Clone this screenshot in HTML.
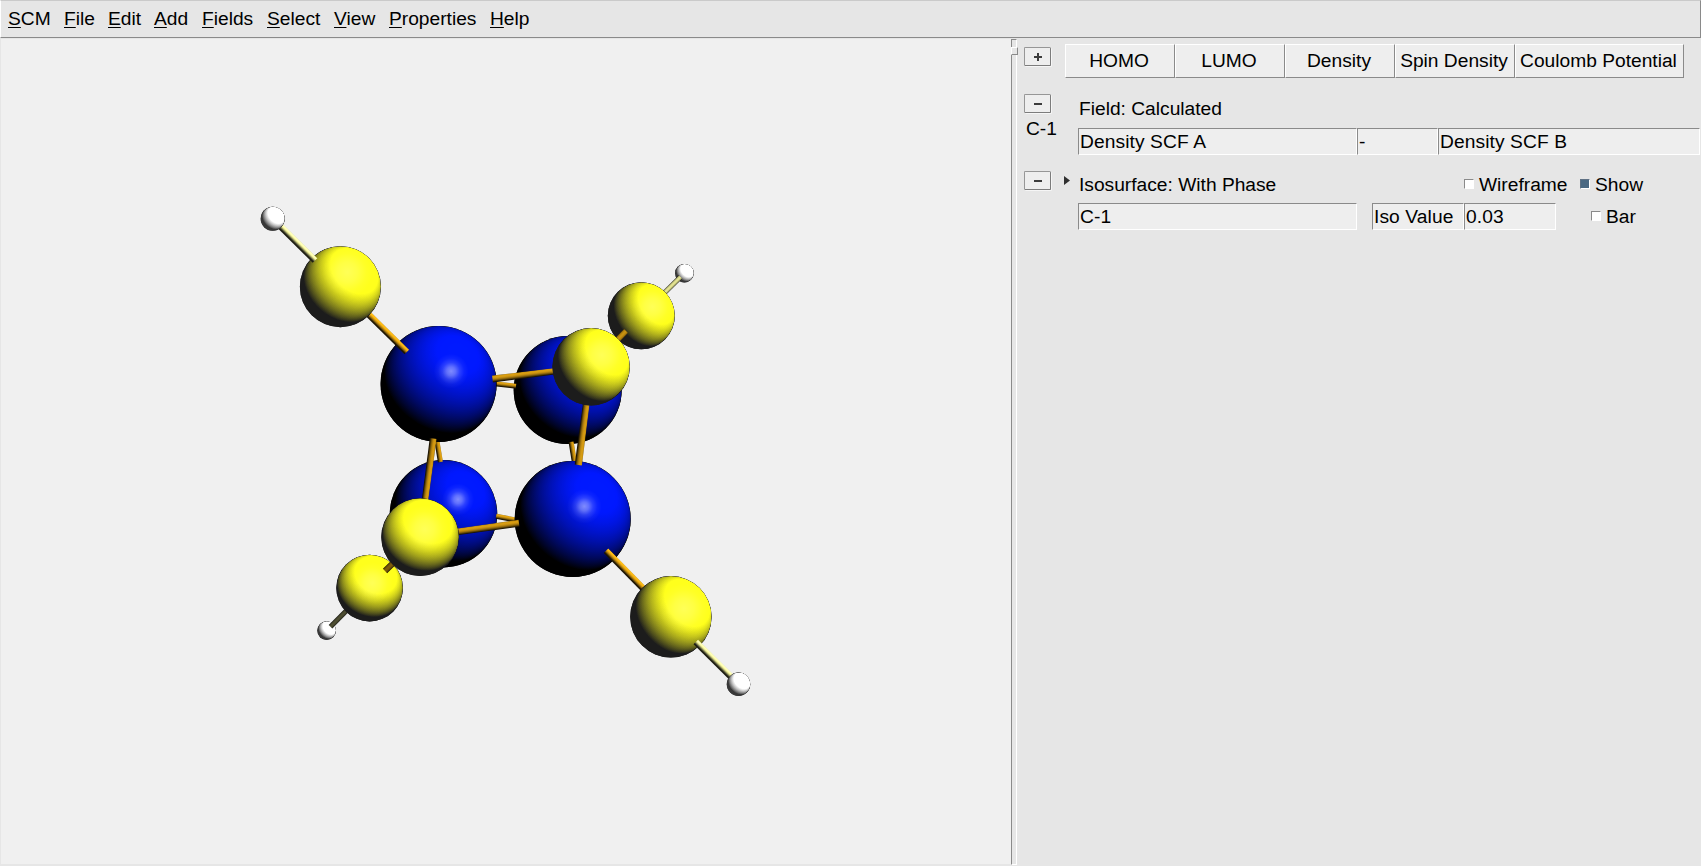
<!DOCTYPE html>
<html>
<head>
<meta charset="utf-8">
<title>SCM</title>
<style>
html,body{margin:0;padding:0;}
body{width:1701px;height:866px;overflow:hidden;background:#e6e6e6;font-family:"Liberation Sans",sans-serif;font-size:19.2px;color:#000;position:relative;}
.abs{position:absolute;}
#menubar{left:0;top:0;width:1701px;height:38px;background:#e6e6e6;border-top:1px solid #cacaca;border-left:1px solid #fff;border-right:1px solid #8a8a8a;border-bottom:1px solid #8a8a8a;box-sizing:border-box;}
#menubar span.m{position:absolute;margin-left:-1px;top:7px;line-height:22px;white-space:nowrap;}
#menubar u{text-decoration:underline;text-decoration-thickness:1px;text-underline-offset:2px;}
#canvas{left:1px;top:39px;width:1010px;height:825px;background:#f0f0f0;}
#panel{left:1017px;top:39px;width:684px;height:827px;background:#e6e6e6;}
#sash{left:1011px;top:39px;width:6px;height:826px;background:#e6e6e6;border-left:1px solid #8a8a8a;border-top:1px solid #8a8a8a;border-right:1px solid #fff;border-bottom:1px solid #fff;box-sizing:border-box;}
#sashh{left:1011px;top:47px;width:7px;height:8px;background:#e6e6e6;border-top:1px solid #fff;border-left:1px solid #fff;border-right:1px solid #8a8a8a;border-bottom:1px solid #8a8a8a;box-sizing:border-box;}
.btn{box-sizing:border-box;background:#eeeeee;border-top:1px solid #fff;border-left:1px solid #fff;border-right:1px solid #8a8a8a;border-bottom:1px solid #8a8a8a;text-align:center;white-space:nowrap;line-height:32px;height:34px;top:44px;padding-right:2px;}
.sbtn{box-sizing:border-box;background:#eeeeee;border:1px solid #7c7c7c;border-top-color:#969696;border-left-color:#969696;border-radius:1.5px;box-shadow:1px 1px 0 #f6f6f6;width:27px;height:19px;left:1024px;}
.sbtn i{position:absolute;background:#3c3c3c;}
.ent{box-sizing:border-box;background:#eeeeee;border-top:1px solid #8a8a8a;border-left:1px solid #8a8a8a;border-right:1px solid #fff;border-bottom:1px solid #fff;height:27px;line-height:26px;padding-left:1px;white-space:nowrap;letter-spacing:0.1px;}
.lbl{white-space:nowrap;line-height:22px;}
.cb{box-sizing:border-box;width:10px;height:10px;background:#fff;border-top:1px solid #8a8a8a;border-left:1px solid #8a8a8a;border-right:1px solid #fff;border-bottom:1px solid #fff;}
.cb.on{background:#4b6983;border-top-color:#5f7184;border-left-color:#5f7184;}
</style>
</head>
<body>
<div id="canvas" class="abs">
<svg id="mol" width="1011" height="827" viewBox="0 39 1011 827" style="position:absolute;left:-1px;top:0">
<defs>
<radialGradient id="nz" cx="0.5" cy="0.5" r="0.5"><stop offset="0.000" stop-color="rgb(0,255,0)"/><stop offset="0.150" stop-color="rgb(0,252,0)"/><stop offset="0.300" stop-color="rgb(0,243,0)"/><stop offset="0.400" stop-color="rgb(0,234,0)"/><stop offset="0.500" stop-color="rgb(0,221,0)"/><stop offset="0.600" stop-color="rgb(0,204,0)"/><stop offset="0.680" stop-color="rgb(0,187,0)"/><stop offset="0.750" stop-color="rgb(0,169,0)"/><stop offset="0.810" stop-color="rgb(0,150,0)"/><stop offset="0.860" stop-color="rgb(0,130,0)"/><stop offset="0.900" stop-color="rgb(0,111,0)"/><stop offset="0.930" stop-color="rgb(0,94,0)"/><stop offset="0.955" stop-color="rgb(0,76,0)"/><stop offset="0.975" stop-color="rgb(0,57,0)"/><stop offset="0.990" stop-color="rgb(0,36,0)"/><stop offset="1.000" stop-color="rgb(0,0,0)"/></radialGradient>
<radialGradient id="sb" cx="0.5" cy="0.5" r="0.5"><stop offset="0" stop-color="#fff" stop-opacity="0.5"/><stop offset="0.25" stop-color="#fff" stop-opacity="0.38"/><stop offset="0.5" stop-color="#fff" stop-opacity="0.17"/><stop offset="0.75" stop-color="#fff" stop-opacity="0.05"/><stop offset="1" stop-color="#fff" stop-opacity="0"/></radialGradient>
<radialGradient id="sy" cx="0.5" cy="0.5" r="0.5"><stop offset="0" stop-color="#ffffa0" stop-opacity="0.45"/><stop offset="0.4" stop-color="#ffffa0" stop-opacity="0.3"/><stop offset="0.75" stop-color="#ffffa0" stop-opacity="0.08"/><stop offset="1" stop-color="#ffffa0" stop-opacity="0"/></radialGradient>
<linearGradient id="nt0" x1="0.1464" y1="0.8536" x2="0.8536" y2="0.1464"><stop offset="0" stop-color="#000"/><stop offset="1" stop-color="#f00"/></linearGradient>
<filter id="f0" x="-0.05" y="-0.05" width="1.1" height="1.1" color-interpolation-filters="sRGB"><feColorMatrix type="matrix" values="1.3323 0.7458 0 0 -0.6662  1.3323 0.7458 0 0 -0.6662  1.3323 0.7458 0 0 -0.6662  0 0 0 1 0"/><feColorMatrix type="matrix" values="1.2500 0 0 0 0.2200  0 1.2500 0 0 0.2200  0 0 1.2500 0 0.2200  0 0 0 1 0"/></filter>
<linearGradient id="nt1" x1="0.1000" y1="0.8000" x2="0.9000" y2="0.2000"><stop offset="0" stop-color="#000"/><stop offset="1" stop-color="#f00"/></linearGradient>
<filter id="f1" x="-0.05" y="-0.05" width="1.1" height="1.1" color-interpolation-filters="sRGB"><feColorMatrix type="matrix" values="1.4621 0.6823 0 0 -0.7011  1.4621 0.6823 0 0 -0.7011  1.4621 0.6823 0 0 -0.7011  0 0 0 1 0"/><feColorMatrix type="matrix" values="1.1300 0 0 0 0.1100  0 1.1300 0 0 0.1100  0 0 0.0000 0 0.1100  0 0 0 1 0"/></filter>
<linearGradient id="nt2" x1="0.1612" y1="0.8677" x2="0.8388" y2="0.1323"><stop offset="0" stop-color="#000"/><stop offset="1" stop-color="#f00"/></linearGradient>
<filter id="f2" x="-0.05" y="-0.05" width="1.1" height="1.1" color-interpolation-filters="sRGB"><feColorMatrix type="matrix" values="1.3290 0.7473 0 0 -0.6445  1.3290 0.7473 0 0 -0.6445  1.3290 0.7473 0 0 -0.6445  0 0 0 1 0"/><feColorMatrix type="matrix" values="0.0000 0 0 0 0.0000  0 0.1000 0 0 0.0000  0 0 1.0600 0 0.0000  0 0 0 1 0"/></filter>
<linearGradient id="nt3" x1="0.2834" y1="0.9506" x2="0.7166" y2="0.0494"><stop offset="0" stop-color="#000"/><stop offset="1" stop-color="#f00"/></linearGradient>
<filter id="f3" x="-0.05" y="-0.05" width="1.1" height="1.1" color-interpolation-filters="sRGB"><feColorMatrix type="matrix" values="1.1509 0.8178 0 0 -0.5455  1.1509 0.8178 0 0 -0.5455  1.1509 0.8178 0 0 -0.5455  0 0 0 1 0"/><feColorMatrix type="matrix" values="1.1300 0 0 0 0.1100  0 1.1300 0 0 0.1100  0 0 0.0000 0 0.1100  0 0 0 1 0"/></filter>
<linearGradient id="nt4" x1="0.2226" y1="0.9160" x2="0.7774" y2="0.0840"><stop offset="0" stop-color="#000"/><stop offset="1" stop-color="#f00"/></linearGradient>
<filter id="f4" x="-0.05" y="-0.05" width="1.1" height="1.1" color-interpolation-filters="sRGB"><feColorMatrix type="matrix" values="1.3103 0.7555 0 0 -0.6351  1.3103 0.7555 0 0 -0.6351  1.3103 0.7555 0 0 -0.6351  0 0 0 1 0"/><feColorMatrix type="matrix" values="0.0000 0 0 0 0.0000  0 0.1000 0 0 0.0000  0 0 1.0600 0 0.0000  0 0 0 1 0"/></filter>
<linearGradient id="nt5" x1="0.1270" y1="0.8330" x2="0.8730" y2="0.1670"><stop offset="0" stop-color="#000"/><stop offset="1" stop-color="#f00"/></linearGradient>
<filter id="f5" x="-0.05" y="-0.05" width="1.1" height="1.1" color-interpolation-filters="sRGB"><feColorMatrix type="matrix" values="1.4435 0.6922 0 0 -0.6917  1.4435 0.6922 0 0 -0.6917  1.4435 0.6922 0 0 -0.6917  0 0 0 1 0"/><feColorMatrix type="matrix" values="1.1300 0 0 0 0.1100  0 1.1300 0 0 0.1100  0 0 0.0000 0 0.1100  0 0 0 1 0"/></filter>
<linearGradient id="nt6" x1="0.2696" y1="0.9437" x2="0.7304" y2="0.0563"><stop offset="0" stop-color="#000"/><stop offset="1" stop-color="#f00"/></linearGradient>
<filter id="f6" x="-0.05" y="-0.05" width="1.1" height="1.1" color-interpolation-filters="sRGB"><feColorMatrix type="matrix" values="1.1722 0.8102 0 0 -0.5561  1.1722 0.8102 0 0 -0.5561  1.1722 0.8102 0 0 -0.5561  0 0 0 1 0"/><feColorMatrix type="matrix" values="1.1300 0 0 0 0.1100  0 1.1300 0 0 0.1100  0 0 0.0000 0 0.1100  0 0 0 1 0"/></filter>
<linearGradient id="nt7" x1="0.1678" y1="0.8737" x2="0.8322" y2="0.1263"><stop offset="0" stop-color="#000"/><stop offset="1" stop-color="#f00"/></linearGradient>
<filter id="f7" x="-0.05" y="-0.05" width="1.1" height="1.1" color-interpolation-filters="sRGB"><feColorMatrix type="matrix" values="1.3591 0.7336 0 0 -0.6495  1.3591 0.7336 0 0 -0.6495  1.3591 0.7336 0 0 -0.6495  0 0 0 1 0"/><feColorMatrix type="matrix" values="1.1300 0 0 0 0.1100  0 1.1300 0 0 0.1100  0 0 0.0000 0 0.1100  0 0 0 1 0"/></filter>
<linearGradient id="nt8" x1="0.1204" y1="0.8254" x2="0.8796" y2="0.1746"><stop offset="0" stop-color="#000"/><stop offset="1" stop-color="#f00"/></linearGradient>
<filter id="f8" x="-0.05" y="-0.05" width="1.1" height="1.1" color-interpolation-filters="sRGB"><feColorMatrix type="matrix" values="1.3929 0.7176 0 0 -0.6664  1.3929 0.7176 0 0 -0.6664  1.3929 0.7176 0 0 -0.6664  0 0 0 1 0"/><feColorMatrix type="matrix" values="1.1300 0 0 0 0.1100  0 1.1300 0 0 0.1100  0 0 0.0000 0 0.1100  0 0 0 1 0"/></filter>
<linearGradient id="bg0" gradientUnits="userSpaceOnUse" x1="669.50" y1="291.29" x2="666.00" y2="287.71"><stop offset="0.000" stop-color="rgb(39,39,25)"/><stop offset="0.075" stop-color="rgb(108,108,69)"/><stop offset="0.200" stop-color="rgb(177,177,113)"/><stop offset="0.350" stop-color="rgb(217,217,139)"/><stop offset="0.500" stop-color="rgb(231,231,148)"/><stop offset="0.650" stop-color="rgb(223,223,142)"/><stop offset="0.800" stop-color="rgb(188,188,120)"/><stop offset="0.925" stop-color="rgb(124,124,79)"/><stop offset="1.000" stop-color="rgb(39,39,25)"/></linearGradient>
<linearGradient id="bg1" gradientUnits="userSpaceOnUse" x1="610.87" y1="351.12" x2="606.23" y2="346.58"><stop offset="0.000" stop-color="rgb(29,21,2)"/><stop offset="0.075" stop-color="rgb(112,81,9)"/><stop offset="0.200" stop-color="rgb(163,118,13)"/><stop offset="0.350" stop-color="rgb(192,139,15)"/><stop offset="0.500" stop-color="rgb(201,146,16)"/><stop offset="0.650" stop-color="rgb(193,140,16)"/><stop offset="0.800" stop-color="rgb(165,120,13)"/><stop offset="0.925" stop-color="rgb(115,83,9)"/><stop offset="1.000" stop-color="rgb(29,21,2)"/></linearGradient>
<linearGradient id="bg2" gradientUnits="userSpaceOnUse" x1="341.47" y1="612.14" x2="345.03" y2="615.66"><stop offset="0.000" stop-color="rgb(13,13,9)"/><stop offset="0.075" stop-color="rgb(41,41,27)"/><stop offset="0.200" stop-color="rgb(64,64,41)"/><stop offset="0.350" stop-color="rgb(77,77,49)"/><stop offset="0.500" stop-color="rgb(80,80,51)"/><stop offset="0.650" stop-color="rgb(76,76,48)"/><stop offset="0.800" stop-color="rgb(62,62,40)"/><stop offset="0.925" stop-color="rgb(39,39,25)"/><stop offset="1.000" stop-color="rgb(13,13,9)"/></linearGradient>
<linearGradient id="bg3" gradientUnits="userSpaceOnUse" x1="400.47" y1="551.89" x2="404.63" y2="556.21"><stop offset="0.000" stop-color="rgb(19,13,1)"/><stop offset="0.075" stop-color="rgb(76,55,6)"/><stop offset="0.200" stop-color="rgb(107,78,9)"/><stop offset="0.350" stop-color="rgb(124,90,10)"/><stop offset="0.500" stop-color="rgb(128,93,10)"/><stop offset="0.650" stop-color="rgb(121,88,10)"/><stop offset="0.800" stop-color="rgb(102,74,8)"/><stop offset="0.925" stop-color="rgb(68,49,5)"/><stop offset="1.000" stop-color="rgb(19,13,1)"/></linearGradient>
<linearGradient id="bg4" gradientUnits="userSpaceOnUse" x1="505.54" y1="382.47" x2="504.96" y2="387.43"><stop offset="0.000" stop-color="rgb(155,112,12)"/><stop offset="0.075" stop-color="rgb(218,158,18)"/><stop offset="0.200" stop-color="rgb(226,164,18)"/><stop offset="0.350" stop-color="rgb(209,151,17)"/><stop offset="0.500" stop-color="rgb(174,126,14)"/><stop offset="0.650" stop-color="rgb(124,90,10)"/><stop offset="0.800" stop-color="rgb(58,42,5)"/><stop offset="0.925" stop-color="rgb(25,18,2)"/><stop offset="1.000" stop-color="rgb(25,18,2)"/></linearGradient>
<linearGradient id="bg5" gradientUnits="userSpaceOnUse" x1="575.27" y1="452.05" x2="570.33" y2="452.85"><stop offset="0.000" stop-color="rgb(155,112,12)"/><stop offset="0.075" stop-color="rgb(218,158,18)"/><stop offset="0.200" stop-color="rgb(226,164,18)"/><stop offset="0.350" stop-color="rgb(209,151,17)"/><stop offset="0.500" stop-color="rgb(174,126,14)"/><stop offset="0.650" stop-color="rgb(124,90,10)"/><stop offset="0.800" stop-color="rgb(57,41,5)"/><stop offset="0.925" stop-color="rgb(25,18,2)"/><stop offset="1.000" stop-color="rgb(25,18,2)"/></linearGradient>
<linearGradient id="bg6" gradientUnits="userSpaceOnUse" x1="441.12" y1="451.04" x2="436.18" y2="451.86"><stop offset="0.000" stop-color="rgb(156,113,13)"/><stop offset="0.075" stop-color="rgb(218,158,18)"/><stop offset="0.200" stop-color="rgb(227,164,18)"/><stop offset="0.350" stop-color="rgb(209,151,17)"/><stop offset="0.500" stop-color="rgb(174,126,14)"/><stop offset="0.650" stop-color="rgb(124,90,10)"/><stop offset="0.800" stop-color="rgb(57,41,5)"/><stop offset="0.925" stop-color="rgb(25,18,2)"/><stop offset="1.000" stop-color="rgb(25,18,2)"/></linearGradient>
<linearGradient id="bg7" gradientUnits="userSpaceOnUse" x1="507.51" y1="515.89" x2="506.59" y2="520.81"><stop offset="0.000" stop-color="rgb(162,117,13)"/><stop offset="0.075" stop-color="rgb(224,162,18)"/><stop offset="0.200" stop-color="rgb(230,167,19)"/><stop offset="0.350" stop-color="rgb(211,153,17)"/><stop offset="0.500" stop-color="rgb(174,126,14)"/><stop offset="0.650" stop-color="rgb(122,88,10)"/><stop offset="0.800" stop-color="rgb(53,39,4)"/><stop offset="0.925" stop-color="rgb(25,18,2)"/><stop offset="1.000" stop-color="rgb(25,18,2)"/></linearGradient>
<linearGradient id="bg8" gradientUnits="userSpaceOnUse" x1="541.38" y1="369.48" x2="542.22" y2="376.22"><stop offset="0.000" stop-color="rgb(132,95,11)"/><stop offset="0.075" stop-color="rgb(203,147,16)"/><stop offset="0.200" stop-color="rgb(219,159,18)"/><stop offset="0.350" stop-color="rgb(210,152,17)"/><stop offset="0.500" stop-color="rgb(183,132,15)"/><stop offset="0.650" stop-color="rgb(140,101,11)"/><stop offset="0.800" stop-color="rgb(79,57,6)"/><stop offset="0.925" stop-color="rgb(27,19,2)"/><stop offset="1.000" stop-color="rgb(27,19,2)"/></linearGradient>
<linearGradient id="bg9" gradientUnits="userSpaceOnUse" x1="588.27" y1="416.31" x2="581.13" y2="415.39"><stop offset="0.000" stop-color="rgb(125,91,10)"/><stop offset="0.075" stop-color="rgb(197,143,16)"/><stop offset="0.200" stop-color="rgb(215,156,17)"/><stop offset="0.350" stop-color="rgb(208,151,17)"/><stop offset="0.500" stop-color="rgb(183,132,15)"/><stop offset="0.650" stop-color="rgb(142,103,11)"/><stop offset="0.800" stop-color="rgb(83,60,7)"/><stop offset="0.925" stop-color="rgb(27,19,2)"/><stop offset="1.000" stop-color="rgb(27,19,2)"/></linearGradient>
<linearGradient id="bg10" gradientUnits="userSpaceOnUse" x1="430.02" y1="488.25" x2="423.28" y2="487.35"><stop offset="0.000" stop-color="rgb(125,90,10)"/><stop offset="0.075" stop-color="rgb(197,143,16)"/><stop offset="0.200" stop-color="rgb(215,156,17)"/><stop offset="0.350" stop-color="rgb(208,151,17)"/><stop offset="0.500" stop-color="rgb(183,132,15)"/><stop offset="0.650" stop-color="rgb(142,103,11)"/><stop offset="0.800" stop-color="rgb(83,60,7)"/><stop offset="0.925" stop-color="rgb(27,19,2)"/><stop offset="1.000" stop-color="rgb(27,19,2)"/></linearGradient>
<linearGradient id="bg11" gradientUnits="userSpaceOnUse" x1="469.07" y1="526.73" x2="470.03" y2="533.67"><stop offset="0.000" stop-color="rgb(130,94,10)"/><stop offset="0.075" stop-color="rgb(201,146,16)"/><stop offset="0.200" stop-color="rgb(218,158,18)"/><stop offset="0.350" stop-color="rgb(210,152,17)"/><stop offset="0.500" stop-color="rgb(183,132,15)"/><stop offset="0.650" stop-color="rgb(141,102,11)"/><stop offset="0.800" stop-color="rgb(80,58,6)"/><stop offset="0.925" stop-color="rgb(27,19,2)"/><stop offset="1.000" stop-color="rgb(27,19,2)"/></linearGradient>
<linearGradient id="bg12" gradientUnits="userSpaceOnUse" x1="375.88" y1="317.03" x2="371.32" y2="321.67"><stop offset="0.000" stop-color="rgb(201,145,16)"/><stop offset="0.075" stop-color="rgb(255,189,21)"/><stop offset="0.200" stop-color="rgb(255,189,21)"/><stop offset="0.350" stop-color="rgb(231,167,19)"/><stop offset="0.500" stop-color="rgb(183,132,15)"/><stop offset="0.650" stop-color="rgb(119,86,10)"/><stop offset="0.800" stop-color="rgb(38,27,3)"/><stop offset="0.925" stop-color="rgb(27,19,2)"/><stop offset="1.000" stop-color="rgb(27,19,2)"/></linearGradient>
<linearGradient id="bg13" gradientUnits="userSpaceOnUse" x1="640.77" y1="581.47" x2="636.13" y2="586.03"><stop offset="0.000" stop-color="rgb(201,145,16)"/><stop offset="0.075" stop-color="rgb(255,189,21)"/><stop offset="0.200" stop-color="rgb(255,189,21)"/><stop offset="0.350" stop-color="rgb(231,167,19)"/><stop offset="0.500" stop-color="rgb(183,132,15)"/><stop offset="0.650" stop-color="rgb(119,86,10)"/><stop offset="0.800" stop-color="rgb(38,27,3)"/><stop offset="0.925" stop-color="rgb(27,19,2)"/><stop offset="1.000" stop-color="rgb(27,19,2)"/></linearGradient>
<linearGradient id="bg14" gradientUnits="userSpaceOnUse" x1="296.13" y1="237.29" x2="291.57" y2="241.91"><stop offset="0.000" stop-color="rgb(234,234,149)"/><stop offset="0.075" stop-color="rgb(255,255,189)"/><stop offset="0.200" stop-color="rgb(255,255,183)"/><stop offset="0.350" stop-color="rgb(242,242,155)"/><stop offset="0.500" stop-color="rgb(178,178,114)"/><stop offset="0.650" stop-color="rgb(96,96,62)"/><stop offset="0.800" stop-color="rgb(30,30,19)"/><stop offset="0.925" stop-color="rgb(30,30,19)"/><stop offset="1.000" stop-color="rgb(30,30,19)"/></linearGradient>
<linearGradient id="bg15" gradientUnits="userSpaceOnUse" x1="719.43" y1="660.79" x2="714.87" y2="665.41"><stop offset="0.000" stop-color="rgb(234,234,149)"/><stop offset="0.075" stop-color="rgb(255,255,189)"/><stop offset="0.200" stop-color="rgb(255,255,183)"/><stop offset="0.350" stop-color="rgb(242,242,155)"/><stop offset="0.500" stop-color="rgb(178,178,114)"/><stop offset="0.650" stop-color="rgb(96,96,62)"/><stop offset="0.800" stop-color="rgb(30,30,19)"/><stop offset="0.925" stop-color="rgb(30,30,19)"/><stop offset="1.000" stop-color="rgb(30,30,19)"/></linearGradient>
</defs>
<g filter="url(#f0)"><circle cx="684.4" cy="273.2" r="9.3" fill="url(#nt0)"/><circle cx="684.4" cy="273.2" r="9.3" fill="url(#nz)" style="mix-blend-mode:screen"/></g>
<polygon points="682.3,278.8 656.8,303.8 653.2,300.2 678.7,275.2" fill="url(#bg0)"/>
<g filter="url(#f1)"><circle cx="641.3" cy="315.7" r="33.5" fill="url(#nt1)"/><circle cx="641.3" cy="315.7" r="33.5" fill="url(#nz)" style="mix-blend-mode:screen"/></g><circle cx="652.4" cy="306.7" r="20.8" fill="url(#sy)"/>
<g filter="url(#f2)"><circle cx="567.7" cy="390.1" r="54.0" fill="url(#nt2)"/><circle cx="567.7" cy="390.1" r="54.0" fill="url(#nz)" style="mix-blend-mode:screen"/></g><circle cx="579.3" cy="378.2" r="16.2" fill="url(#sb)"/>
<polygon points="628.0,332.9 593.4,369.0 588.8,364.4 624.0,329.1" fill="url(#bg1)"/>
<g filter="url(#f0)"><circle cx="326.6" cy="630.6" r="9.3" fill="url(#nt0)"/><circle cx="326.6" cy="630.6" r="9.3" fill="url(#nz)" style="mix-blend-mode:screen"/></g>
<polygon points="328.7,625.0 354.2,599.2 357.8,602.8 332.3,628.6" fill="url(#bg2)"/>
<g filter="url(#f3)"><circle cx="369.6" cy="588.1" r="33.3" fill="url(#nt3)"/><circle cx="369.6" cy="588.1" r="33.3" fill="url(#nz)" style="mix-blend-mode:screen"/></g><circle cx="372.3" cy="583.1" r="20.6" fill="url(#sy)"/>
<g filter="url(#f2)"><circle cx="443.5" cy="513.7" r="53.7" fill="url(#nt2)"/><circle cx="443.5" cy="513.7" r="53.7" fill="url(#nz)" style="mix-blend-mode:screen"/></g><circle cx="458.0" cy="499.5" r="16.1" fill="url(#sb)"/>
<polygon points="382.9,568.8 418.0,534.9 422.2,539.3 387.1,573.2" fill="url(#bg3)"/>
<polygon points="494.8,381.2 516.3,383.7 515.7,388.7 494.2,386.2" fill="url(#bg4)"/>
<polygon points="573.6,441.5 577.0,462.6 572.0,463.4 568.6,442.3" fill="url(#bg5)"/>
<polygon points="439.4,440.5 442.9,461.6 437.9,462.4 434.4,441.3" fill="url(#bg6)"/>
<polygon points="496.6,513.8 518.5,517.9 517.5,522.9 495.6,518.8" fill="url(#bg7)"/>
<g filter="url(#f4)"><circle cx="438.6" cy="384.0" r="58.0" fill="url(#nt4)"/><circle cx="438.6" cy="384.0" r="58.0" fill="url(#nz)" style="mix-blend-mode:screen"/></g><circle cx="451.1" cy="371.2" r="17.4" fill="url(#sb)"/>
<g filter="url(#f2)"><circle cx="572.7" cy="518.9" r="58.0" fill="url(#nt2)"/><circle cx="572.7" cy="518.9" r="58.0" fill="url(#nz)" style="mix-blend-mode:screen"/></g><circle cx="584.3" cy="506.4" r="17.4" fill="url(#sb)"/>
<polygon points="492.1,375.6 590.7,363.7 591.5,369.7 492.9,382.4" fill="url(#bg8)"/>
<polygon points="594.2,367.1 581.9,465.5 574.7,464.5 588.0,366.3" fill="url(#bg9)"/>
<polygon points="436.6,438.9 423.2,537.5 417.0,536.7 429.8,438.1" fill="url(#bg10)"/>
<polygon points="419.7,534.0 518.5,519.8 519.5,526.8 420.5,540.2" fill="url(#bg11)"/>
<polygon points="342.7,284.4 409.1,349.7 404.5,354.3 338.1,289.0" fill="url(#bg12)"/>
<polygon points="608.3,548.4 673.2,614.5 668.6,619.1 603.7,553.0" fill="url(#bg13)"/>
<g filter="url(#f5)"><circle cx="591.1" cy="366.7" r="38.7" fill="url(#nt5)"/><circle cx="591.1" cy="366.7" r="38.7" fill="url(#nz)" style="mix-blend-mode:screen"/></g><circle cx="601.9" cy="355.1" r="24.0" fill="url(#sy)"/>
<g filter="url(#f6)"><circle cx="420.1" cy="537.1" r="38.8" fill="url(#nt6)"/><circle cx="420.1" cy="537.1" r="38.8" fill="url(#nz)" style="mix-blend-mode:screen"/></g><circle cx="424.8" cy="529.3" r="24.1" fill="url(#sy)"/>
<g filter="url(#f7)"><circle cx="340.4" cy="286.7" r="40.5" fill="url(#nt7)"/><circle cx="340.4" cy="286.7" r="40.5" fill="url(#nz)" style="mix-blend-mode:screen"/></g><circle cx="347.3" cy="272.1" r="25.1" fill="url(#sy)"/>
<g filter="url(#f8)"><circle cx="670.9" cy="616.8" r="40.7" fill="url(#nt8)"/><circle cx="670.9" cy="616.8" r="40.7" fill="url(#nz)" style="mix-blend-mode:screen"/></g><circle cx="683.9" cy="608.7" r="25.2" fill="url(#sy)"/>
<polygon points="275.0,216.4 317.3,258.2 312.7,262.8 270.4,221.0" fill="url(#bg14)"/>
<polygon points="698.1,639.7 740.8,681.9 736.2,686.5 693.5,644.3" fill="url(#bg15)"/>
<g filter="url(#f0)"><circle cx="272.7" cy="218.7" r="12.0" fill="url(#nt0)"/><circle cx="272.7" cy="218.7" r="12.0" fill="url(#nz)" style="mix-blend-mode:screen"/></g>
<g filter="url(#f0)"><circle cx="738.5" cy="684.2" r="11.7" fill="url(#nt0)"/><circle cx="738.5" cy="684.2" r="11.7" fill="url(#nz)" style="mix-blend-mode:screen"/></g>
</svg>
</div>
<div id="panel" class="abs"></div>
<div id="sash" class="abs"></div>
<div id="sashh" class="abs"></div>
<div id="menubar" class="abs">
<span class="m" style="left:8px"><u>S</u>CM</span>
<span class="m" style="left:64px"><u>F</u>ile</span>
<span class="m" style="left:108px"><u>E</u>dit</span>
<span class="m" style="left:154px"><u>A</u>dd</span>
<span class="m" style="left:202px"><u>F</u>ields</span>
<span class="m" style="left:267px"><u>S</u>elect</span>
<span class="m" style="left:334px"><u>V</u>iew</span>
<span class="m" style="left:389px"><u>P</u>roperties</span>
<span class="m" style="left:490px"><u>H</u>elp</span>
</div>

<div class="abs sbtn" style="top:47px"><i style="left:9px;top:8px;width:8px;height:2px"></i><i style="left:12px;top:5px;width:2px;height:8px"></i></div>
<div class="abs btn" style="left:1065px;width:110px">HOMO</div>
<div class="abs btn" style="left:1175px;width:110px">LUMO</div>
<div class="abs btn" style="left:1285px;width:110px">Density</div>
<div class="abs btn" style="left:1395px;width:120px">Spin Density</div>
<div class="abs btn" style="left:1515px;width:169px">Coulomb Potential</div>

<div class="abs sbtn" style="top:94px"><i style="left:9px;top:8px;width:8px;height:2px"></i></div>
<div class="abs lbl" style="left:1026px;top:118px">C-1</div>
<div class="abs lbl" style="left:1079px;top:98px">Field: Calculated</div>
<div class="abs ent" style="left:1078px;top:128px;width:279px">Density SCF A</div>
<div class="abs ent" style="left:1357px;top:128px;width:81px">-</div>
<div class="abs ent" style="left:1438px;top:128px;width:262px">Density SCF B</div>

<div class="abs sbtn" style="top:171px"><i style="left:9px;top:8px;width:8px;height:2px"></i></div>
<svg class="abs" style="left:1063px;top:175px" width="8" height="11" viewBox="0 0 8 11"><path d="M1 1 L7 5.5 L1 10 Z" fill="#303030"/></svg>
<div class="abs lbl" style="left:1079px;top:174px">Isosurface: With Phase</div>
<div class="abs cb" style="left:1464px;top:179px"></div>
<div class="abs lbl" style="left:1479px;top:174px">Wireframe</div>
<div class="abs cb on" style="left:1580px;top:179px"></div>
<div class="abs lbl" style="left:1595px;top:174px">Show</div>
<div class="abs ent" style="left:1078px;top:203px;width:279px">C-1</div>
<div class="abs ent" style="left:1372px;top:203px;width:92px">Iso Value</div>
<div class="abs ent" style="left:1464px;top:203px;width:92px">0.03</div>
<div class="abs cb" style="left:1591px;top:211px"></div>
<div class="abs lbl" style="left:1606px;top:206px">Bar</div>
</body>
</html>
